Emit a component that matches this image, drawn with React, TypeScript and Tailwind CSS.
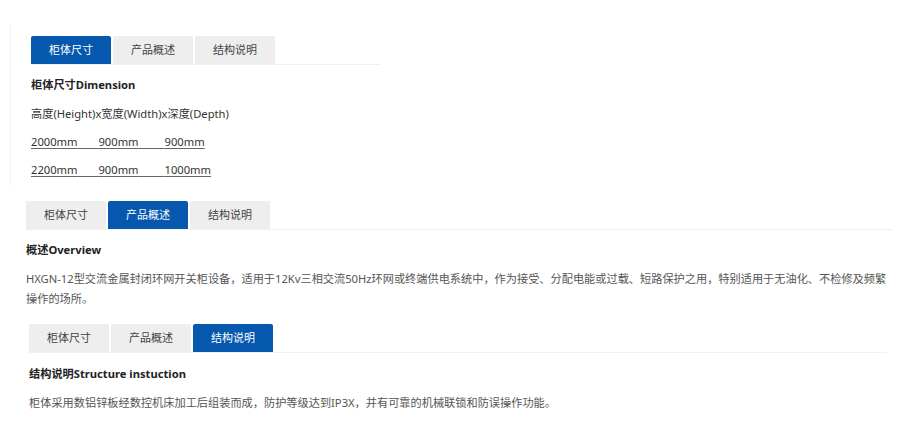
import React from "react";

const FONT = { fontFamily: '"Noto Sans", "Noto Sans CJK SC", sans-serif' };

function Tabs({ active }: { active: number }) {
  const names = ["柜体尺寸", "产品概述", "结构说明"];
  return (
    <div className="flex gap-[2px] border-b border-[#f0f0f0]">
      {names.map((n, i) => (
        <div
          key={n}
          className={
            i === active
              ? "w-[80px] h-[28px] flex items-center justify-center text-[11px] text-white bg-[#0658ae] rounded-t-[2px]"
              : "w-[80px] h-[28px] flex items-center justify-center text-[11px] text-[#444] bg-[#eeeeee] rounded-t-[2px]"
          }
        >
          {n}
        </div>
      ))}
    </div>
  );
}

export default function App() {
  return (
    <div className="w-[900px] h-[448px] bg-white overflow-hidden" style={FONT}>
      {/* Panel 1 */}
      <div className="ml-[10px] pt-[24px]">
        <div className="w-[370px] border-l border-[#f4f4f4] pl-[20px] pt-[12px] pb-[6px]">
          <Tabs active={0} />
          <div className="mt-[10px] leading-[20px] text-[11.2px] font-bold text-[#222]">柜体尺寸Dimension</div>
          <div className="mt-[9px] leading-[20px] text-[11.2px] text-[#333]">高度(Height)x宽度(Width)x深度(Depth)</div>
          <div className="mt-[8px] leading-[20px] text-[11.2px] text-[#333]">
            <span className="underline decoration-[#666] underline-offset-[2px]">
              2000mm<span className="tracking-[18px]">&nbsp;</span>900mm<span className="tracking-[23px]">&nbsp;</span>900mm
            </span>
          </div>
          <div className="mt-[8px] leading-[20px] text-[11.2px] text-[#333]">
            <span className="underline decoration-[#666] underline-offset-[2px]">
              2200mm<span className="tracking-[18px]">&nbsp;</span>900mm<span className="tracking-[23px]">&nbsp;</span>1000mm
            </span>
          </div>
        </div>
      </div>

      {/* Panel 2 */}
      <div className="ml-[26px] mt-[15px] w-[866px]">
        <Tabs active={1} />
        <div className="mt-[10px] leading-[20px] text-[11.2px] font-bold text-[#222]">概述Overview</div>
        <p className="mt-[9px] leading-[20px] text-[11.2px] text-[#555]">
          HXGN-12型交流金属封闭环网开关柜设备，适用于12Kv三相交流50Hz环网或终端供电系统中，作为接受、分配电能或过载、短路保护之用，特别适用于无油化、不检修及频繁操作的场所。
        </p>
      </div>

      {/* Panel 3 */}
      <div className="ml-[29px] mt-[15px] w-[858px]">
        <Tabs active={2} />
        <div className="mt-[11px] leading-[20px] text-[11.2px] font-bold text-[#222]">结构说明Structure instuction</div>
        <p className="mt-[9px] leading-[20px] text-[11.2px] text-[#555]">
          柜体采用数铝锌板经数控机床加工后组装而成，防护等级达到IP3X，并有可靠的机械联锁和防误操作功能。
        </p>
      </div>
    </div>
  );
}
